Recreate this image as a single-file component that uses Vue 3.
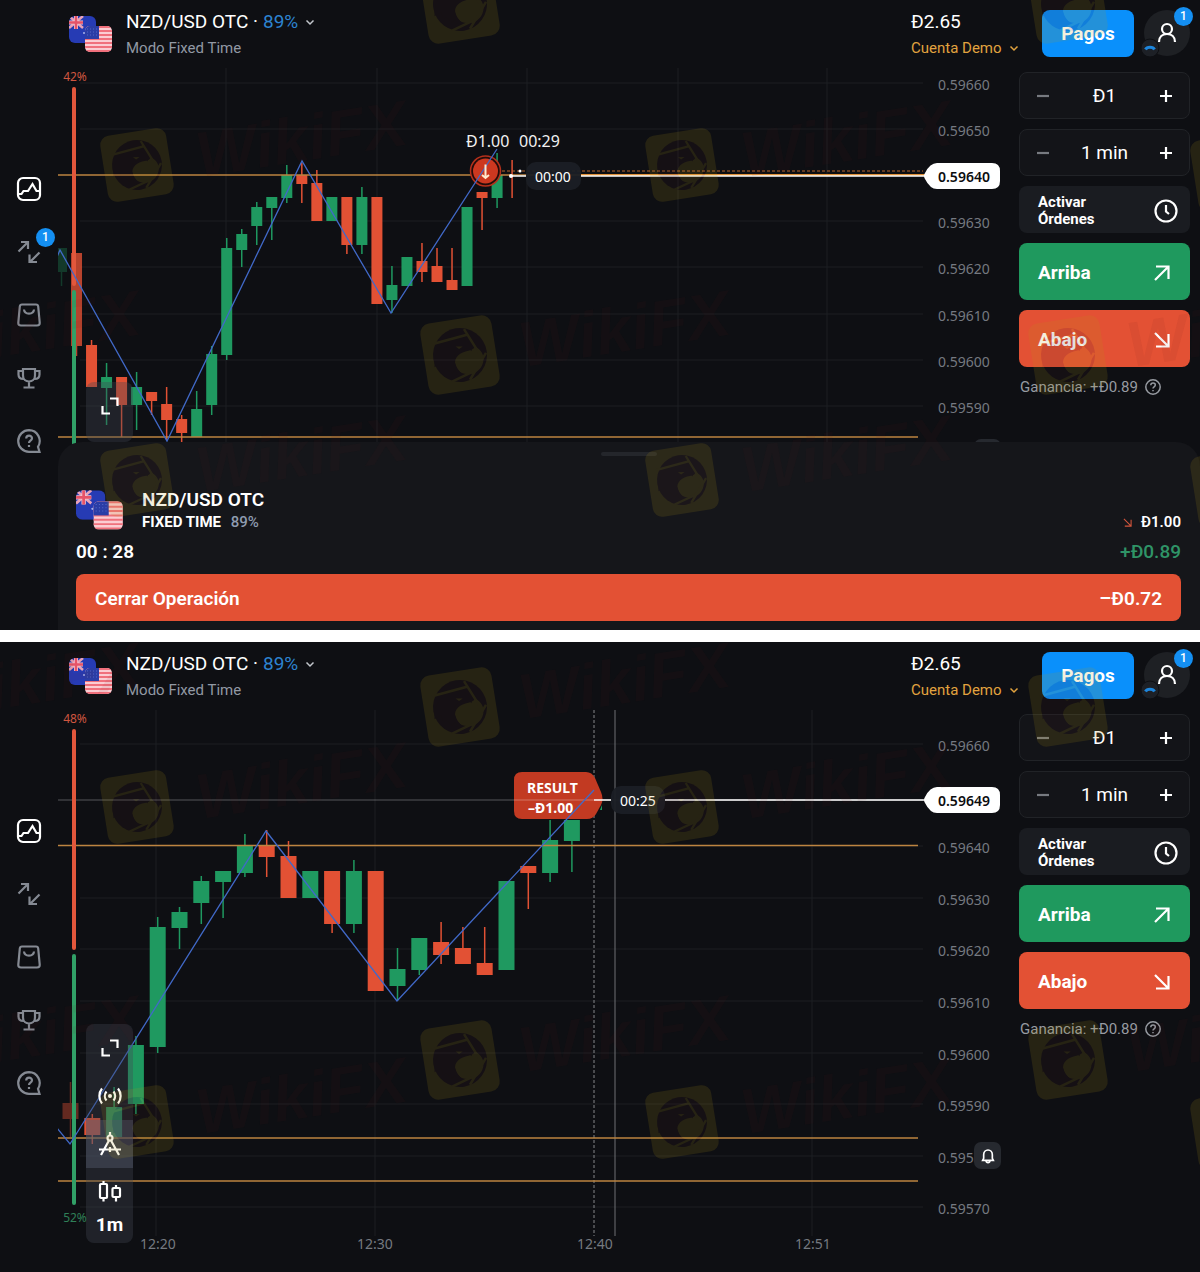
<template>
  <div class="page">
    <svg class="defs" aria-hidden="true">
      <symbol id="flags" viewBox="0 0 44 37">
        <clipPath id="nz"><rect width="27" height="27" rx="6" /></clipPath>
        <clipPath id="us"><rect x="16" y="10" width="27" height="26" rx="5" /></clipPath>
        <g clip-path="url(#nz)">
          <rect width="27" height="27" fill="#263bb4" />
          <path d="M0 0l14 12M14 0L0 12" stroke="#e9a3b8" stroke-width="2.500" />
          <path d="M7 0v13M0 6.500h14" stroke="#f3c3cd" stroke-width="4" />
          <path d="M7 0v13M0 6.500h14" stroke="#e65368" stroke-width="2.500" />
          <circle cx="15" cy="17" r="1" fill="#a9b2e8" />
        </g>
        <g clip-path="url(#us)">
          <rect x="16" y="10" width="27" height="26" fill="#fbccd2" />
          <path d="M16 11h27M16 15h27M16 19h27M16 23h27M16 27h27M16 31h27M16 35h27" stroke="#f0707c" stroke-width="1.800" />
          <rect x="16" y="10" width="14" height="13" fill="#2a3da6" />
          <path d="M18 13h11M18 16h11M18 19h11" stroke="#5266c8" stroke-width="1" stroke-dasharray="1 2" />
        </g>
      </symbol>
      <symbol id="mark" viewBox="-40 -40 80 80">
        <rect x="-36" y="-36" width="72" height="72" rx="10" fill="#b99a14" />
        <circle r="27" fill="#401a1a" />
        <path d="M-6 9C-7 1 1-3 9-3c4 0 6-1 7-3C22-2 24 4 22 10 19 18 12 21 6 20-1 20-6 15-6 9z" fill="#b99a14" />
        <path d="M-27 8c1-10 6-19 15-23 8-3 18-1 23 5 2 3 2 5 1 8-2-3-4-4-7-3-10 0-13 6-11 13 1 6 4 10 8 14l-8-3-1-5-4 3-4-6-4 1-1-7z" fill="#401a1a" />
        <path d="M-26-15L11-19M8-25L22 8M26 2L6 26M12 18L-12 25" stroke="#b99a14" stroke-width="2.500" />
        <path d="M-3-9l7 1-4 2z" fill="#b99a14" />
      </symbol>
    </svg>

    <section v-for="t in terminals" :key="t.id" class="terminal">
      <header class="topbar">
        <button class="pair">
          <svg class="flags"><use href="#flags" /></svg>
          <span class="pair-text">
            <span class="pair-name">NZD/USD OTC · <span class="blue">89%</span>
              <svg class="chev" viewBox="0 0 10 10"><path d="M1.500 3.500L5 7l3.500-3.500" /></svg>
            </span>
            <span class="pair-mode">Modo Fixed Time</span>
          </span>
        </button>
        <div class="account">
          <span class="balance">Đ2.65</span>
          <span class="account-type">
            <select aria-label="Cuenta"><option>Cuenta Demo</option></select>
            <svg class="chev" viewBox="0 0 10 10"><path d="M1.500 3.500L5 7l3.500-3.500" /></svg>
          </span>
        </div>
        <button class="pay">Pagos</button>
        <button class="avatar" aria-label="Perfil">
          <svg class="icon" viewBox="0 0 24 24"><circle cx="12" cy="8" r="5" /><path d="M4 21c0-5 3.500-8 8-8s8 3 8 8" /></svg>
          <span class="badge avatar-count">1</span>
          <svg class="rank" viewBox="0 0 20 20"><circle cx="10" cy="10" r="9" fill="#1d2026" stroke="#0e0f13" stroke-width="1" /><path d="M5.500 11.500C7 8.500 13 8.500 14.500 11.500" stroke="#1e86dd" stroke-width="3" /></svg>
        </button>
      </header>

      <div class="body">
        <nav class="rail">
          <button class="rail-btn active" aria-label="Gráfico">
            <svg class="icon" viewBox="0 0 24 24"><rect x="1" y="1" width="22" height="22" rx="5" /><path d="M2 17h2.500l2-3h4.500l4.500-7 4 7H22" /></svg>
          </button>
          <button class="rail-btn" aria-label="Operaciones">
            <svg class="icon" viewBox="0 0 24 24"><path d="M1.500 11.500L11 2M4 2h7v7M22.500 12.500L13 22M12.500 14.500V22H20" /></svg>
            <span v-if="t.openTrades" class="badge rail-count">{{ t.openTrades }}</span>
          </button>
          <button class="rail-btn" aria-label="Mercado">
            <svg class="icon" viewBox="0 0 24 24"><path d="M5 1.500h14q2 0 2.200 2l1.500 16q.3 3-2.700 3H4q-3 0-2.700-3l1.500-16q.2-2 2.200-2z" /><path d="M7 6.500c.5 5.500 9.500 5.500 10 0" /></svg>
          </button>
          <button class="rail-btn" aria-label="Torneos">
            <svg class="icon" viewBox="0 0 24 24"><path d="M6 3h12v6.500c0 8-12 8-12 0zM6 5H1.500v3.500c0 3 2 4.500 5 4.500M18 5h4.500v3.500c0 3-2 4.500-5 4.500M12 16v5M6.500 21.500h11" /></svg>
          </button>
          <button class="rail-btn" aria-label="Ayuda">
            <svg class="icon" viewBox="0 0 24 24"><path d="M12 1.200a10.800 10.800 0 1 0 0 21.600h10.500l-1.500-5A10.800 10.800 0 0 0 12 1.200z" /><path d="M9.200 9.500c0-3.800 5.800-3.600 5.800-.2 0 2.500-3 2.300-3 4.700M12 16v2" /></svg>
          </button>
        </nav>

        <div class="chart">
          <svg class="plot" viewBox="58 68 961 562">
            <g class="grid">
              <line v-for="p in t.prices" :key="p.y" x1="80" x2="923" :y1="p.y - 2" :y2="p.y - 2" />
              <line v-for="x in t.columns" :key="x" :x1="x" :x2="x" y1="68" y2="594" />
            </g>
            <g v-if="t.result">
              <line x1="594" x2="594" y1="68" y2="594" class="expiry" />
              <line x1="615" x2="615" y1="68" y2="594" class="deadline" />
              <line x1="58" x2="923" y1="158" y2="158" class="price-faint" />
            </g>
            <g v-for="(c, i) in t.candles" :key="i" :class="c[0] === 'u' ? 'up' : 'down'" :opacity="c[5] || 1">
              <line :x1="cx(t, i)" :x2="cx(t, i)" :y1="c[3]" :y2="c[4]" />
              <rect :x="cx(t, i) - t.body / 2" :y="c[1]" :width="t.body" :height="c[2] - c[1]" />
            </g>
            <line v-for="y in t.levels" :key="y" x1="58" x2="918" :y1="y" :y2="y" class="level" />

            <g class="depth">
              <line x1="74" x2="74" y1="89" :y2="t.split - 2" class="sell" />
              <line x1="74" x2="74" :y1="t.split + 6" :y2="t.depthEnd" class="buy" />
              <text x="75" y="81" class="sell-text">{{ t.sell }}</text>
              <text v-if="t.buy" x="75" y="580" class="buy-text">{{ t.buy }}</text>
            </g>

            <g v-if="t.result">
              <path d="M600 168l2-5v5z" fill="#1f9960" />
              <path d="M522 130h64q6 0 9 6l6 14q3 7 0 13l-5 9q-3 5-9 5h-65q-8 0-8-8v-31q0-8 8-8z" fill="#c23a22" />
              <line x1="514" x2="594" y1="158" y2="158" class="price-faint" />
              <text x="527" y="151" class="result">RESULT</text>
              <text x="528" y="171" class="result">–Đ1.00</text>
              <polyline :points="t.zigzag" class="zigzag" />
              <line x1="594" x2="611" y1="158" y2="158" class="price-line" />
              <rect x="611" y="144" width="54" height="28" rx="10" class="pill" />
              <text x="638" y="164" class="timer">00:25</text>
              <line x1="665" x2="925" y1="158" y2="158" class="price-line" />
            </g>
            <g v-else>
              <text x="466" y="147" class="trade">Đ1.00</text>
              <text x="519" y="147" class="trade">00:29</text>
              <circle cx="485.500" cy="171" r="15" fill="#230c0a" stroke="#b3301c" stroke-width="1.500" />
              <circle cx="485.500" cy="171" r="12.500" fill="#cc3820" />
              <polyline :points="t.zigzag" class="zigzag" />
              <path d="M485.500 164.500v13M482 175l3.500 3 3.500-3" fill="none" stroke="#ffe9cf" stroke-width="2" />
              <line x1="502" x2="923" y1="171" y2="171" class="entry" />
              <line x1="512" x2="526" y1="176" y2="176" class="price-line" />
              <circle cx="511" cy="176" r="2" fill="#fff" />
              <circle cx="520" cy="171" r="1.500" fill="#fff" />
              <rect x="526" y="162" width="55" height="28" rx="10" class="pill" />
              <text x="553" y="182" class="timer">00:00</text>
              <line x1="581" x2="925" y1="175" y2="175" class="glow" />
              <line x1="581" x2="925" y1="176" y2="176" class="price-line" />
            </g>

            <g class="axis">
              <text v-for="p in t.prices" :key="p.text" x="938" :y="p.y + 5">{{ p.text }}</text>
              <text v-for="m in t.times" :key="m.text" :x="m.x" y="607" class="time">{{ m.text }}</text>
            </g>
            <g :transform="`translate(924 ${t.priceY})`">
              <path d="M1-3Q6-13 13-13h55q8 0 8 8v10q0 8-8 8h-55Q6 13 1 3q-2-3 0-6z" fill="#fff" />
              <text x="14" y="6" class="price-now">{{ t.price }}</text>
            </g>
          </svg>

          <div class="tools">
            <button aria-label="Pantalla completa"><svg class="icon" viewBox="0 0 24 24"><path d="M12 4.500h7.500V12M4.500 12v7.500H12" /></svg></button>
            <template v-if="t.result">
              <button aria-label="Señales"><svg class="icon" viewBox="0 0 24 24"><circle cx="12" cy="12" r="2" fill="#fff" stroke="none" /><path d="M8.500 7.500a7 7 0 0 0 0 9M15.500 7.500a7 7 0 0 1 0 9M4 4.500a12 12 0 0 0 0 15M20 4.500a12 12 0 0 1 0 15" /></svg></button>
              <button class="selected" aria-label="Dibujo"><svg class="icon" viewBox="0 0 24 24"><circle cx="12" cy="6" r="2.500" /><path d="M12 0v3.500M11 8.500L3 23M13 8.500L21 23M1 17.500h22M12 15v5" /></svg></button>
              <button aria-label="Tipo de gráfico"><svg class="icon" viewBox="0 0 24 24"><rect x="2" y="4" width="7" height="14" rx="1" /><rect x="14.500" y="8" width="7.500" height="9" rx="1" /><path d="M5.500 1v3M5.500 18v3.500M18 5v3M18 17v4.500" /></svg></button>
              <button class="period">1m</button>
            </template>
          </div>
          <button class="bell" :class="{ low: !t.result }" aria-label="Alertas">
            <svg class="icon" viewBox="0 0 24 24"><path d="M4 18.500h16l-1.500-3V10a6.500 7 0 0 0-13 0v5.500zM9 19c.5 4 5.500 4 6 0" /></svg>
          </button>
        </div>

        <aside class="panel">
          <div class="stepper">
            <button class="dim" aria-label="Reducir importe"><svg class="icon" viewBox="0 0 14 14"><path d="M1 7h12" /></svg></button>
            <input v-model="amount" type="text" aria-label="Importe">
            <button aria-label="Aumentar importe"><svg class="icon" viewBox="0 0 14 14"><path d="M1 7h12M7 1v12" /></svg></button>
          </div>
          <div class="stepper">
            <button class="dim" aria-label="Reducir tiempo"><svg class="icon" viewBox="0 0 14 14"><path d="M1 7h12" /></svg></button>
            <input v-model="duration" type="text" aria-label="Tiempo">
            <button aria-label="Aumentar tiempo"><svg class="icon" viewBox="0 0 14 14"><path d="M1 7h12M7 1v12" /></svg></button>
          </div>
          <button class="orders">
            <span>Activar<br>Órdenes</span>
            <svg class="icon" viewBox="0 0 24 24"><circle cx="12" cy="12" r="10.500" /><path d="M12 6v6.500l3 2.500" /></svg>
          </button>
          <button class="trade-btn rise">Arriba
            <svg class="icon" viewBox="0 0 16 16"><path d="M1 15L14.500 1.500M2 1.500h12.500V14" /></svg>
          </button>
          <button class="trade-btn fall">Abajo
            <svg class="icon" viewBox="0 0 16 16"><path d="M1 1l13.500 13.500M2 14.500h12.500V2" /></svg>
          </button>
          <div class="profit">
            <span>Ganancia: +Đ0.89</span>
            <svg class="icon" viewBox="0 0 16 16"><circle cx="8" cy="8" r="7.200" /><path d="M5.800 6.300c0-3 4.500-2.800 4.500-.2 0 1.700-2.300 1.700-2.300 3.400M8 11v1.300" /></svg>
          </div>
        </aside>
      </div>

      <div v-if="!t.result" class="sheet">
        <span class="handle"></span>
        <div class="deal">
          <svg class="flags"><use href="#flags" /></svg>
          <div class="deal-text">
            <strong>NZD/USD OTC</strong>
            <span class="deal-mode">FIXED TIME <span class="deal-rate">89%</span></span>
          </div>
          <span class="stake">
            <svg class="icon" viewBox="0 0 10 10"><path d="M1 1l7.500 7.500M2 9h7V2" /></svg>Đ1.00
          </span>
        </div>
        <div class="deal-row">
          <span>00 : 28</span>
          <span class="gain">+Đ0.89</span>
        </div>
        <button class="close-deal"><span>Cerrar Operación</span><span>–Đ0.72</span></button>
      </div>
    </section>

    <svg class="watermark" aria-hidden="true">
      <g v-for="(w, i) in marks" :key="i" :transform="`translate(${w.x} ${w.y}) rotate(-9)`">
        <use href="#mark" :x="-w.size / 2" :y="-w.size / 2" :width="w.size" :height="w.size" opacity="0.140" />
        <text v-if="w.label" x="60" y="22">WikiFX</text>
      </g>
    </svg>
  </div>
</template>

<script setup>
import { ref } from 'vue'

const amount = ref('Đ1')
const duration = ref('1 min')

const marks = [
  { x: 460, y: 4, size: 80 },
  { x: 1068, y: 4, size: 80 },
  { x: 137, y: 165, size: 74, label: true },
  { x: 682, y: 165, size: 74, label: true },
  { x: 1230, y: 172, size: 80 },
  { x: -130, y: 355, size: 80, label: true },
  { x: 460, y: 355, size: 80, label: true },
  { x: 1068, y: 355, size: 80, label: true },
  { x: 137, y: 480, size: 74, label: true },
  { x: 682, y: 480, size: 74, label: true },
  { x: 1230, y: 488, size: 80 },
  { x: -130, y: 707, size: 80, label: true },
  { x: 460, y: 707, size: 80, label: true },
  { x: 1068, y: 707, size: 80 },
  { x: 137, y: 807, size: 74, label: true },
  { x: 682, y: 807, size: 74, label: true },
  { x: -130, y: 1060, size: 80, label: true },
  { x: 460, y: 1060, size: 80, label: true },
  { x: 1068, y: 1060, size: 80, label: true },
  { x: 137, y: 1122, size: 74, label: true },
  { x: 682, y: 1122, size: 74, label: true },
  { x: 1230, y: 1130, size: 80 }
]

// candle: direction, body top, body bottom, wick top, wick bottom, opacity
const terminals = [
  {
    id: 'open',
    openTrades: 1,
    result: false,
    price: '0.59640',
    priceY: 176,
    sell: '42%',
    buy: '',
    split: 286,
    depthEnd: 444,
    body: 11,
    start: 61.5,
    step: 15.02,
    levels: [175, 437],
    columns: [226, 377, 527, 678, 827],
    zigzag: '57,257 60,250 167,441 302,161 391,313 497,149',
    prices: [
      { text: '0.59660', y: 85 },
      { text: '0.59650', y: 131 },
      { text: '0.59630', y: 223 },
      { text: '0.59620', y: 269 },
      { text: '0.59610', y: 316 },
      { text: '0.59600', y: 362 },
      { text: '0.59590', y: 408 }
    ],
    times: [],
    candles: [
      ['u', 248, 272, 248, 286, 0.3],
      ['d', 253, 346, 253, 356, 0.8],
      ['d', 345, 387, 340, 387],
      ['u', 377, 388, 363, 425],
      ['d', 377, 405, 377, 437],
      ['u', 387, 405, 372, 430],
      ['d', 392, 401, 392, 415],
      ['d', 404, 420, 387, 440],
      ['d', 419, 433, 415, 442],
      ['u', 409, 437, 391, 437],
      ['u', 354, 405, 346, 415],
      ['u', 248, 355, 238, 360],
      ['u', 234, 250, 229, 267],
      ['u', 207, 226, 202, 245],
      ['u', 197, 208, 197, 240],
      ['u', 175, 198, 165, 203],
      ['d', 175, 184, 163, 203],
      ['d', 183, 221, 170, 221],
      ['u', 197, 221, 197, 221],
      ['d', 197, 245, 197, 254],
      ['u', 197, 245, 187, 254],
      ['d', 197, 304, 197, 304],
      ['u', 285, 300, 266, 313],
      ['u', 257, 286, 257, 286],
      ['d', 261, 272, 243, 282],
      ['d', 266, 282, 248, 282],
      ['d', 280, 290, 248, 290],
      ['u', 207, 286, 207, 286],
      ['d', 192, 198, 192, 230],
      ['u', 175, 198, 153, 208],
      ['d', 176, 176, 160, 198]
    ]
  },
  {
    id: 'closed',
    openTrades: 0,
    result: true,
    price: '0.59649',
    priceY: 158,
    sell: '48%',
    buy: '52%',
    split: 308,
    depthEnd: 561,
    body: 16,
    start: 70.5,
    step: 21.8,
    levels: [203.5, 496, 539],
    columns: [156, 375, 812],
    zigzag: '57,486 70,502 266,189 397,359 594,148',
    prices: [
      { text: '0.59660', y: 104 },
      { text: '0.59640', y: 206 },
      { text: '0.59630', y: 258 },
      { text: '0.59620', y: 309 },
      { text: '0.59610', y: 361 },
      { text: '0.59600', y: 413 },
      { text: '0.59590', y: 464 },
      { text: '0.59580', y: 516 },
      { text: '0.59570', y: 567 }
    ],
    times: [
      { text: '12:20', x: 158 },
      { text: '12:30', x: 375 },
      { text: '12:40', x: 595 },
      { text: '12:51', x: 813 }
    ],
    candles: [
      ['d', 461, 477, 440, 495, 0.4],
      ['d', 476, 493, 472, 502],
      ['u', 465, 495, 445, 495],
      ['u', 403, 462, 394, 472],
      ['u', 285, 405, 275, 411],
      ['u', 270, 286, 265, 307],
      ['u', 239, 261, 234, 282],
      ['u', 229, 240, 229, 276],
      ['u', 203, 231, 192, 235],
      ['d', 203, 215, 188, 235],
      ['d', 214, 256, 199, 256],
      ['u', 229, 256, 229, 256],
      ['d', 229, 282, 229, 291],
      ['u', 229, 282, 218, 291],
      ['d', 229, 349, 229, 349],
      ['u', 327, 344, 306, 359],
      ['u', 296, 328, 296, 333],
      ['d', 300, 313, 280, 322],
      ['d', 306, 322, 285, 322],
      ['d', 321, 333, 285, 333],
      ['u', 239, 328, 239, 328],
      ['d', 224, 231, 224, 267],
      ['u', 198, 231, 178, 240],
      ['u', 178, 199, 178, 230]
    ]
  }
]

function cx(t, i) {
  return t.start + i * t.step
}
</script>

<style>
body { margin: 0; background: #fff; }
</style>

<style scoped>
.page { position: relative; display: flex; flex-direction: column; gap: 12px; overflow: hidden; font-family: Roboto, "Liberation Sans", sans-serif; color: #fff; }
.defs { position: absolute; width: 0; height: 0; }
button, input, select { font: inherit; color: inherit; background: none; border: 0; padding: 0; margin: 0; }
button { cursor: pointer; }
svg { display: block; flex-shrink: 0; }
.icon { width: 24px; height: 24px; fill: none; stroke: currentColor; stroke-width: 2.2; overflow: visible; }

.terminal { position: relative; background: #0e0f13; }
.topbar { display: flex; align-items: flex-start; height: 68px; padding: 0 10px 0 69px; box-sizing: border-box; }
.pair { display: flex; gap: 13px; text-align: left; padding-top: 10px; }
.flags { width: 44px; height: 37px; margin-top: 6px; }
.pair-text { display: flex; flex-direction: column; gap: 2px; }
.pair-name { display: flex; align-items: center; gap: 5px; font-size: 19px; line-height: 24px; }
.pair-name .chev { margin-left: 2px; stroke: #c3c7cc; }
.pair-mode { font-size: 15px; line-height: 24px; color: #9299a4; }
.blue { color: #2d83d0; }
.chev { width: 10px; height: 10px; fill: none; stroke: currentColor; stroke-width: 1.5; }
.account { display: flex; flex-direction: column; gap: 2px; width: 108px; margin-left: auto; padding-top: 10px; }
.balance { font-size: 19px; line-height: 24px; }
.account-type { display: flex; align-items: center; justify-content: space-between; font-size: 15px; line-height: 24px; color: #e2a33f; }
.account-type select { appearance: none; height: 24px; }
.pay { width: 92px; height: 47px; margin: 10px 10px 0 23px; border-radius: 8px; background: #0a90fb; font-size: 19px; font-weight: 700; }
.avatar { position: relative; display: flex; align-items: center; justify-content: center; width: 46px; height: 46px; margin-top: 10px; border-radius: 50%; background: #1e2024; }
.badge { position: absolute; width: 19px; height: 19px; border-radius: 50%; background: #148ff2; color: #fff; font-size: 12px; font-weight: 500; line-height: 19px; text-align: center; }
.avatar-count { top: -3px; right: -3px; }
.rank { position: absolute; left: -4px; bottom: -2px; width: 20px; height: 20px; fill: none; }

.body { display: grid; grid-template-columns: 58px 1fr 181px; }
.rail { display: flex; flex-direction: column; align-items: center; gap: 39px; padding-top: 109px; }
.rail-btn { position: relative; width: 24px; height: 24px; color: #858a93; }
.rail-btn.active { color: #fff; }
.rail-count { left: 19px; top: -12px; }

.chart { position: relative; min-width: 0; font-family: "Noto Sans", sans-serif; }
.plot { width: 100%; height: auto; }
.grid line { stroke: #1d1f23; stroke-width: 1; }
.up line { stroke: #1f9960; stroke-width: 1.5; }
.up rect { fill: #1f9960; }
.down line { stroke: #e25134; stroke-width: 1.5; }
.down rect { fill: #e25134; }
.zigzag { fill: none; stroke: #4169c8; stroke-width: 1.3; }
.level { stroke: #bd8440; stroke-width: 1.5; }
.depth line { stroke-width: 4; stroke-linecap: round; }
.depth .sell { stroke: #e2573c; }
.depth .buy { stroke: #31a067; }
.depth text { font-size: 12px; text-anchor: middle; }
.sell-text { fill: #cf5640; }
.buy-text { fill: #2f8058; }
.expiry { stroke: #85878a; stroke-width: 1; stroke-dasharray: 3 2; }
.deadline { stroke: #6f7175; stroke-width: 1; }
.price-faint { stroke: #fff; stroke-opacity: 0.3; }
.price-line { stroke: #fff; stroke-width: 1.5; }
.glow { stroke: #e09038; stroke-width: 2; }
.entry { stroke: #b9672e; stroke-dasharray: 3 2; }
.pill { fill: #1b1f25; fill-opacity: 0.95; }
.timer { font-size: 14px; text-anchor: middle; fill: #fff; }
.trade { font-size: 16px; fill: #f1f1f1; }
.result { font-size: 14px; font-weight: 700; fill: #fff; }
.axis { font-size: 14px; fill: #757980; }
.axis .time { text-anchor: middle; }
.price-now { font-size: 14px; font-weight: 600; fill: #0b0c0f; }

.tools { position: absolute; left: 28px; top: 314px; display: flex; flex-direction: column; width: 47px; min-height: 60px; padding-bottom: 9px; box-sizing: border-box; border-radius: 8px; background: rgba(66, 71, 82, 0.35); }
.tools button { display: flex; align-items: center; justify-content: center; height: 48px; }
.tools .selected { background: rgba(90, 98, 118, 0.4); }
.tools .period { height: 18px; font-family: Roboto, sans-serif; font-size: 19px; font-weight: 700; line-height: 18px; }
.bell { position: absolute; right: 18px; top: 432px; display: flex; align-items: center; justify-content: center; width: 27px; height: 27px; border-radius: 7px; background: #26292f; }
.bell.low { top: 371px; }
.bell .icon { width: 16px; height: 16px; stroke-width: 2.5; }

.panel { display: flex; flex-direction: column; gap: 10px; padding: 4px 10px 0 0; }
.stepper { display: flex; align-items: center; justify-content: space-between; height: 47px; padding: 0 16px; box-sizing: border-box; border: 1px solid #212327; border-radius: 8px; background: #131418; }
.stepper input { width: 90px; font-size: 19px; text-align: center; }
.stepper .icon { width: 14px; height: 14px; }
.dim { color: #777a80; }
.orders { display: flex; align-items: center; justify-content: space-between; height: 47px; padding: 2px 12px 0 19px; box-sizing: border-box; border-radius: 8px; background: #1a1c21; text-align: left; font-size: 15px; font-weight: 700; line-height: 17px; }
.trade-btn { display: flex; align-items: center; justify-content: space-between; height: 57px; padding: 2px 20px 0 19px; box-sizing: border-box; border-radius: 8px; font-size: 19px; font-weight: 700; }
.trade-btn .icon { width: 16px; height: 16px; }
.rise { background: #1f995e; }
.fall { background: #e35134; }
.profit { display: flex; align-items: center; gap: 7px; padding-left: 1px; font-size: 15px; line-height: 20px; color: #979ba2; }
.profit .icon { width: 16px; height: 16px; stroke-width: 1.5; }

.sheet { position: absolute; left: 58px; right: 0; bottom: 0; display: flex; flex-direction: column; padding: 10px 19px 9px 18px; border-radius: 24px 24px 0 0; background: #15161a; }
.handle { align-self: center; width: 56px; height: 4px; border-radius: 2px; background: #24262b; }
.deal { display: flex; gap: 18px; margin-top: 32px; }
.deal .flags { width: 48px; height: 41px; margin-top: 2px; }
.deal-text { display: flex; flex-direction: column; }
.deal-text strong { font-size: 19px; font-weight: 600; line-height: 24px; }
.deal-mode { font-size: 15px; font-weight: 700; line-height: 20px; }
.deal-rate { margin-left: 6px; font-weight: 500; color: #8f9cb0; }
.stake { display: flex; align-items: center; align-self: flex-end; gap: 9px; margin-left: auto; font-size: 15px; font-weight: 600; line-height: 20px; }
.stake .icon { width: 9px; height: 9px; stroke: #d2553c; stroke-width: 1.2; }
.deal-row { display: flex; justify-content: space-between; margin: 8px 0 10px; font-size: 19px; font-weight: 600; line-height: 24px; }
.gain { font-weight: 500; color: #2f9467; }
.close-deal { display: flex; align-items: center; justify-content: space-between; height: 47px; padding: 1px 19px 0; box-sizing: border-box; border-radius: 8px; background: #e35134; font-size: 19px; font-weight: 600; }

.watermark { position: absolute; inset: 0; width: 100%; height: 100%; pointer-events: none; }
.watermark text { font: italic 700 64px "Liberation Sans", sans-serif; fill: #601818; fill-opacity: 0.07; }
</style>
